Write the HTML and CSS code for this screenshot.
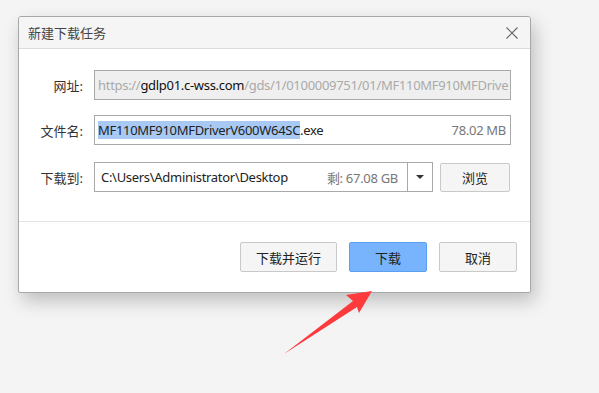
FILE: index.html
```html
<!DOCTYPE html>
<html lang="zh-CN">
<head>
    <meta charset="UTF-8">
    <title>新建下载任务</title>
    <link rel="stylesheet" href="styles.css">
</head>
<body>
    <div class="dialog">
        <div class="title-bar">
            <span class="title">新建下载任务</span>
            <svg class="close" width="12" height="12" viewBox="0 0 12 12">
                <path d="M0.5 0.5 L11.5 11.5 M11.5 0.5 L0.5 11.5" stroke="#666" stroke-width="1.1" fill="none"/>
            </svg>
        </div>
        <div class="form">
            <div class="row">
                <label class="label">网址:</label>
                <div class="field field-disabled">
                    <span class="muted">https://</span><span class="host">gdlp01.c-wss.com</span><span class="muted">/gds/1/0100009751/01/MF110MF910MFDrive</span>
                </div>
            </div>
            <div class="row row-name">
                <label class="label">文件名:</label>
                <div class="field">
                    <span class="selected">MF110MF910MFDriverV600W64SC</span><span>.exe</span>
                    <span class="size">78.02 MB</span>
                </div>
            </div>
            <div class="row row-save">
                <label class="label">下载到:</label>
                <div class="field field-path">
                    <span>C:\Users\Administrator\Desktop</span>
                    <span class="size">剩: 67.08 GB</span>
                    <span class="drop"><i class="caret"></i></span>
                </div>
                <button class="btn btn-browse">浏览</button>
            </div>
        </div>
        <div class="footer">
            <button class="btn btn-run">下载并运行</button>
            <button class="btn btn-primary">下载</button>
            <button class="btn">取消</button>
        </div>
    </div>
    <svg class="arrow" width="599" height="393" viewBox="0 0 599 393">
        <polygon points="372,291 346,295 353,301 284,354 357,307 359,313" fill="#fd3a3c"/>
    </svg>
</body>
</html>
```

FILE: styles.css
```css
body {
    margin: 0;
    width: 599px;
    height: 393px;
    background-color: #f4f4f4;
    font-family: "Noto Sans", "Noto Sans CJK SC", sans-serif;
    font-size: 13px;
    color: #222;
    padding: 16px 0 0 18px;
    box-sizing: border-box;
    overflow: hidden;
}
.dialog {
    width: 513px;
    height: 277px;
    background-color: #fff;
    border: 1px solid #a8a8a8;
    border-radius: 3px 3px 2px 2px;
    box-sizing: border-box;
    box-shadow: 4px 8px 18px rgba(0, 0, 0, 0.22);
    display: flex;
    flex-direction: column;
}
.title-bar {
    height: 31px;
    flex-shrink: 0;
    background-color: #f5f5f5;
    border-bottom: 1px solid #dcdcdc;
    border-radius: 3px 3px 0 0;
    display: flex;
    align-items: center;
    justify-content: space-between;
    padding: 0 12px 0 9px;
}
.title {
    color: #444;
}
.form {
    padding: 21px 0 0 0;
    border-bottom: 1px solid #e4e4e4;
    height: 173px;
    flex-shrink: 0;
    box-sizing: border-box;
}
.row {
    display: flex;
    align-items: center;
    height: 30px;
}
.row-name {
    margin-top: 15px;
}
.row-save {
    margin-top: 17px;
}
.label {
    width: 64px;
    text-align: right;
    margin-right: 11px;
    color: #333;
}
.field {
    width: 417px;
    height: 30px;
    border: 1px solid #a9a9a9;
    box-sizing: border-box;
    display: flex;
    align-items: center;
    padding: 0 4px 0 3px;
    white-space: nowrap;
    overflow: hidden;
    letter-spacing: -0.3px;
}
.field-disabled {
    background-color: #efefef;
}
.muted {
    color: #aaa;
}
.host {
    color: #111;
}
.selected {
    background-color: #a8c9f4;
    line-height: 18px;
}
.size {
    margin-left: auto;
    color: #777;
}
.field-path {
    width: 339px;
    padding: 0 0 0 6px;
}
.drop {
    width: 24px;
    height: 28px;
    flex-shrink: 0;
    margin-left: 9px;
    border-left: 1px solid #a9a9a9;
    display: flex;
    align-items: center;
    justify-content: center;
}
.caret {
    width: 0;
    height: 0;
    border-left: 4px solid transparent;
    border-right: 4px solid transparent;
    border-top: 4px solid #333;
}
.btn {
    font-family: inherit;
    font-size: 13px;
    color: #222;
    width: 78px;
    height: 30px;
    background-color: #f5f5f5;
    border: 1px solid #c9c9c9;
    border-radius: 2px;
    padding: 0;
    cursor: pointer;
}
.btn-browse {
    width: 70px;
    height: 29px;
    margin-left: 7px;
}
.footer {
    display: flex;
    justify-content: flex-end;
    gap: 12px;
    padding: 20px 13px 0 0;
}
.btn-run {
    width: 97px;
}
.btn-primary {
    background-color: #77b4fd;
    border-color: #5c9ff0;
}
.arrow {
    position: absolute;
    left: 0;
    top: 0;
}
```
